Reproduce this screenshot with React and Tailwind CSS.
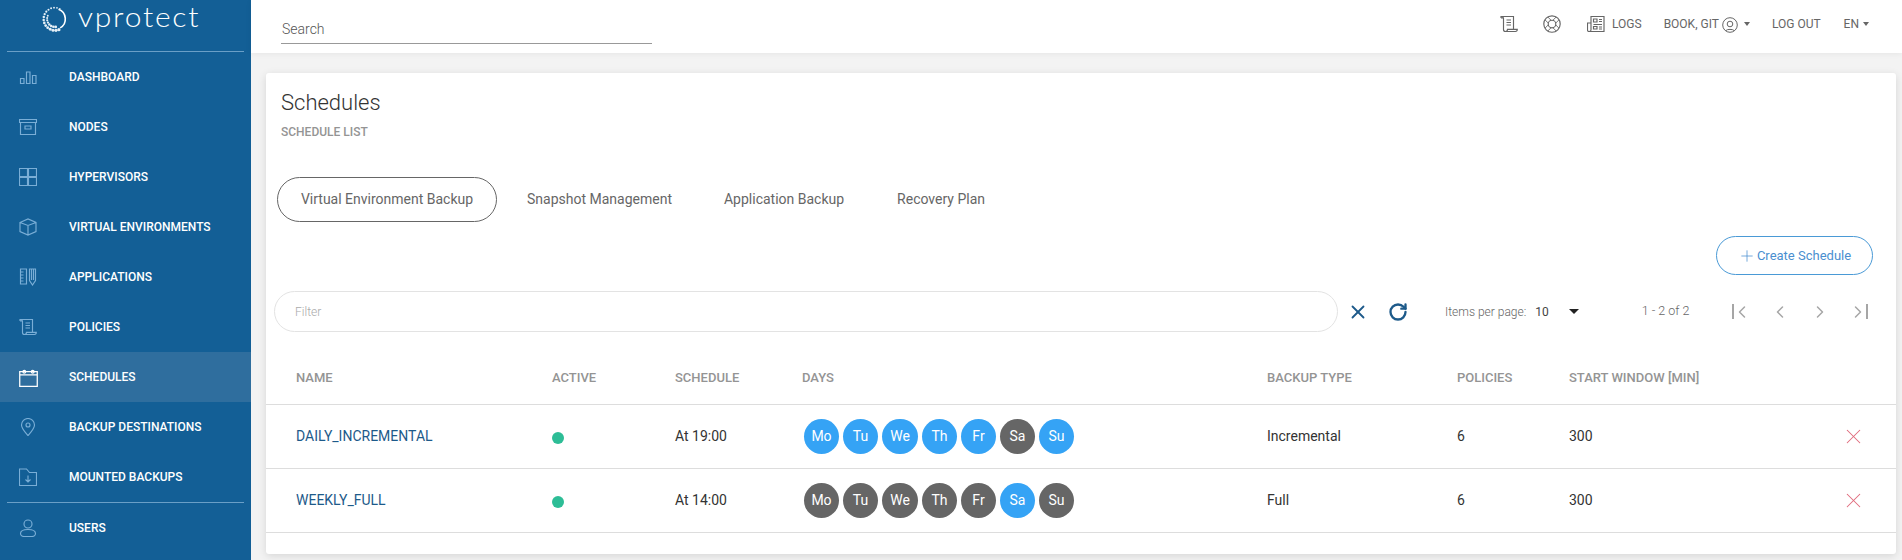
import { Plus, RotateCw, X, ChevronLeft, ChevronRight } from 'lucide-react';

const Svg = ({ children, className = 'w-[18px] h-[18px]' }) => (
  <svg viewBox="0 0 18 18" fill="none" stroke="currentColor" strokeWidth="1.150" className={className}>
    {children}
  </svg>
);

const BarsIcon = () => (
  <Svg>
    <path d="M1.500 10.500h3.500v5h-3.500zM7.500 4h3.500v11.500h-3.500zM13.500 7.500h3.500v8h-3.500z" />
  </Svg>
);
const ArchiveIcon = () => (
  <Svg>
    <path d="M.5 1.500h17v3h-17zM1.500 4.500v12h15v-12M6 8h6v3h-6z" />
  </Svg>
);
const GridIcon = () => (
  <Svg>
    <path d="M.5.5h8v8h-8zM9.500.5h8v8h-8zM.5 9.500h8v8h-8zM9.500 9.500h8v8h-8z" />
  </Svg>
);
const BoxIcon = () => (
  <Svg>
    <path d="M1 4.500 9 1l8 3.500v9L9 17l-8-3.500zM1 4.500 9 7.500l8-3M9 7.500V17" />
  </Svg>
);
const RulerPenIcon = () => (
  <Svg>
    <path d="M1.500 1h6v15h-6zM1.500 4h3M1.500 7h3M1.500 10h3M1.500 13h3M10.500 1h6v11.500l-3 4.500-3-4.500zM12.500 1v11M14.500 1v11" />
  </Svg>
);
const ScrollIcon = () => (
  <Svg>
    <path d="M1 3V1.500h12.500V14M1 3h2.500M1 1.500c1.500 0 2.500.5 2.500 2v11c0 1 .8 2 2 2h10c1 0 1.800-1 1.800-2.200H7.500c0 1.200-.8 2.200-2 2.200M6.500 5h4.500M6.500 7.500h4.500M6.500 10h4.500" />
  </Svg>
);
const CalendarIcon = () => (
  <Svg className="w-[19px] h-[19px]">
    <path d="M.7 3.500h16.600v13.800H.7zM.7 6.500h16.600" strokeWidth="1.200" />
    <circle cx="5" cy="3.500" r="1.300" />
    <circle cx="13" cy="3.500" r="1.300" />
  </Svg>
);
const PinIcon = () => (
  <Svg>
    <path d="M9 17.500C5.500 13.500 2.500 10.500 2.500 7a6.500 6.500 0 0 1 13 0c0 3.500-3 6.500-6.500 10.500z" />
    <circle cx="9" cy="7" r="2" />
  </Svg>
);
const FolderDownIcon = () => (
  <Svg>
    <path d="M.5 1h7l3 3.500h7v13H.5zM9 7.500v6.500M6.500 11.500 9 14l2.500-2.500" />
  </Svg>
);
const UserIcon = () => (
  <Svg>
    <circle cx="9" cy="5" r="4" />
    <path d="M9 10.500c4.500 0 7.500 1.500 7.500 4 0 2-2 3-3.500 3H5c-1.500 0-3.500-1-3.500-3 0-2.500 3-4 7.500-4z" />
  </Svg>
);
const BuoyIcon = () => (
  <Svg>
    <circle cx="9" cy="9" r="8.200" />
    <circle cx="9" cy="9" r="3.800" />
    <path
      d="M8.130 5.310 4.790 1.970M5.310 8.130 1.970 4.790M9.870 5.310l3.340-3.340M12.690 8.130l3.340-3.340M8.130 12.690l-3.340 3.340M5.310 9.870l-3.340 3.340M9.870 12.690l3.340 3.340M12.690 9.870l3.340 3.340"
      strokeWidth=".9"
    />
  </Svg>
);
const NewsIcon = () => (
  <Svg>
    <path d="M4 1.500h13v15H2c-1 0-1.500-.7-1.500-1.500V8H4zM4 8v7c0 1-.8 1.500-2 1.500M6.500 4h3.500v3H6.500zM12 4.500h3M12 6.500h3M6.500 9.500h8.500M6.500 11.500h3.500v2.500H6.500zM12 12h3M12 14h3" />
  </Svg>
);
const UserCircleIcon = () => (
  <svg viewBox="0 0 16 16" fill="none" stroke="currentColor" strokeWidth="1" className="w-4 h-4">
    <circle cx="8" cy="8" r="7.300" />
    <circle cx="8" cy="7" r="2.800" />
    <path d="M4 13.500c1-1.500 7-1.500 8 0" />
  </svg>
);

// dots of the logo ring: angle in degrees, radius of the ring, size of the dot
const logoDots = [
  ...Array.from({ length: 16 }, (_, i) => {
    const angle = 70 + i * 15;
    return { angle, ring: 10.500, size: 1.500 - i * 0.050 };
  }),
  ...Array.from({ length: 8 }, (_, i) => ({ angle: 85 + i * 17, ring: 7.300, size: 1.300 - i * 0.060 })),
];

const LogoIcon = () => (
  <svg viewBox="0 0 24 24" fill="none" className="w-[26px] h-[26px]">
    <path d="M15.250 3.070A9.500 9.500 0 0 1 16.750 20.230" stroke="#ffffff" strokeWidth="1.500" />
    {logoDots.map((d, i) => (
      <circle
        key={i}
        cx={12 + d.ring * Math.cos((d.angle * Math.PI) / 180)}
        cy={12 + d.ring * Math.sin((d.angle * Math.PI) / 180)}
        r={d.size}
        fill="#e6f0f7"
      />
    ))}
  </svg>
);

const navItems = [
  { label: 'DASHBOARD', icon: BarsIcon },
  { label: 'NODES', icon: ArchiveIcon },
  { label: 'HYPERVISORS', icon: GridIcon },
  { label: 'VIRTUAL ENVIRONMENTS', icon: BoxIcon },
  { label: 'APPLICATIONS', icon: RulerPenIcon },
  { label: 'POLICIES', icon: ScrollIcon },
  { label: 'SCHEDULES', icon: CalendarIcon, active: true },
  { label: 'BACKUP DESTINATIONS', icon: PinIcon },
  { label: 'MOUNTED BACKUPS', icon: FolderDownIcon },
];

const NavItem = ({ label, icon: Icon, active }) => (
  <div className={`h-[50px] flex items-center pl-[19px] text-[12px] font-medium text-white ${active ? 'bg-[#2f6e9e]' : ''}`}>
    <span className={`w-[50px] shrink-0 ${active ? 'text-white' : 'text-[#7aaed6]'}`}>
      <Icon />
    </span>
    {label}
  </div>
);

const Sidebar = () => (
  <aside className="w-[251px] shrink-0 h-[560px] bg-[#135f96] overflow-hidden">
    <div className="h-[51px] flex items-start pt-[6px] pl-[42px] gap-[10px] text-white">
      <LogoIcon />
      <span className="text-[27px] leading-[22px] font-['Lato'] font-light tracking-[1.6px] scale-x-[1.11] origin-left">vprotect</span>
    </div>
    <div className="h-px mx-[7px] bg-[#6a9fc7]" />
    {navItems.map((item) => <NavItem key={item.label} {...item} />)}
    <div className="h-px mx-[7px] bg-[#6a9fc7]" />
    <NavItem label="USERS" icon={UserIcon} />
  </aside>
);

const Caret = () => (
  <span className="inline-block border-x-[3.500px] border-x-transparent border-t-[4px] border-t-[#666]" />
);

const Header = () => (
  <header className="h-[53px] bg-white flex items-center justify-between pl-[30px] shadow-[0_1px_6px_rgba(0,0,0,0.06)] text-[#666] text-[12px]">
    <div className="w-[371px] h-[26px] mt-[8px] border-b border-[#999] text-[14px] font-light text-[#555] pt-px pl-px">Search</div>
    <div className="flex items-center pb-[6px] pr-[33px]">
      <span className="mr-[25px]"><ScrollIcon /></span>
      <span className="mr-[26px]"><BuoyIcon /></span>
      <span className="mr-[7px]"><NewsIcon /></span>
      <span className="mr-[22px]">LOGS</span>
      <span>BOOK, GIT</span>
      <span className="ml-[3px] mt-[2px] mr-[6px]"><UserCircleIcon /></span>
      <Caret />
      <span className="ml-[22px] mr-[23px]">LOG OUT</span>
      <span className="mr-[4px]">EN</span>
      <Caret />
    </div>
  </header>
);

const tabs = ['Virtual Environment Backup', 'Snapshot Management', 'Application Backup', 'Recovery Plan'];

const Tabs = () => (
  <div className="flex items-center text-[14px] text-[#666] ml-[11px]">
    <div className="h-[45px] w-[220px] flex items-center justify-center border border-[#666] rounded-full mr-[30px]">{tabs[0]}</div>
    <div className="mr-[52px]">{tabs[1]}</div>
    <div className="mr-[53px]">{tabs[2]}</div>
    <div>{tabs[3]}</div>
  </div>
);

const Toolbar = () => (
  <div className="flex items-center h-[41px] mt-[16px] pl-[8px] text-[12px] text-[#888]">
    <div className="w-[1064px] h-[41px] border border-[#e3e3e3] rounded-full flex items-center pl-[20px] text-[12px] text-[#aaa] font-light">Filter</div>
    <X className="w-[22px] h-[22px] ml-[9px] text-[#1d5a8a]" strokeWidth={2} />
    <RotateCw className="w-[20px] h-[20px] ml-[19px] text-[#1d5a8a]" strokeWidth={2.800} />
    <span className="ml-[37px] font-light text-[#666]">Items per page:</span>
    <span className="ml-[9px] text-[#444]">10</span>
    <span className="ml-[20px] inline-block border-x-[5px] border-x-transparent border-t-[5px] border-t-[#222]" />
    <span className="ml-[63px] w-[49px] text-[12.500px] font-light text-[#666]">1 - 2 of 2</span>
    <div className="flex items-center ml-[41px] text-[#a6a6a6]">
      <span className="w-[2px] h-[15px] bg-[#a6a6a6]" />
      <ChevronLeft className="w-[20px] h-[20px] ml-[-2px]" strokeWidth={1.800} />
      <ChevronLeft className="w-[20px] h-[20px] ml-[18px]" strokeWidth={1.800} />
      <ChevronRight className="w-[20px] h-[20px] ml-[20px]" strokeWidth={1.800} />
      <ChevronRight className="w-[20px] h-[20px] ml-[18px]" strokeWidth={1.800} />
      <span className="w-[2px] h-[15px] bg-[#a6a6a6] ml-[-2px]" />
    </div>
  </div>
);

const days = ['Mo', 'Tu', 'We', 'Th', 'Fr', 'Sa', 'Su'];

const rows = [
  { name: 'DAILY_INCREMENTAL', time: 'At 19:00', on: ['Mo', 'Tu', 'We', 'Th', 'Fr', 'Su'], type: 'Incremental' },
  { name: 'WEEKLY_FULL', time: 'At 14:00', on: ['Sa'], type: 'Full' },
];

const gridCols = 'grid grid-cols-[256px_123px_127px_465px_190px_112px_272px_1fr] items-center pl-[30px]';

const Table = () => (
  <div className="mt-[24px]">
    <div className={`${gridCols} h-[49px] pb-[5px] border-b border-[#ddd] text-[13px] font-medium text-[#949494]`}>
      <div>NAME</div>
      <div>ACTIVE</div>
      <div>SCHEDULE</div>
      <div>DAYS</div>
      <div>BACKUP TYPE</div>
      <div>POLICIES</div>
      <div>START WINDOW [MIN]</div>
    </div>
    {rows.map((r) => (
      <div key={r.name} className={`${gridCols} h-[64px] border-b border-[#ddd] text-[14px] text-[#333]`}>
        <div className="text-[#1d5a8a]">{r.name}</div>
        <div className="pt-[3px]"><span className="block w-[12px] h-[12px] rounded-full bg-[#2dbd96]" /></div>
        <div>{r.time}</div>
        <div className="flex gap-[4px] ml-[2px]">
          {days.map((d) => (
            <span
              key={d}
              className={`${d === 'We' ? 'w-[36px]' : 'w-[35px]'} h-[35px] rounded-full flex items-center justify-center text-[14px] text-white ${r.on.includes(d) ? 'bg-[#35a3f5]' : 'bg-[#666]'}`}
            >
              {d}
            </span>
          ))}
        </div>
        <div>{r.type}</div>
        <div>6</div>
        <div>300</div>
        <div><X className="w-[25px] h-[25px] text-[#e06a7c]" strokeWidth={1} /></div>
      </div>
    ))}
  </div>
);

export default function App() {
  return (
    <div className="flex h-[560px] w-[1902px] overflow-hidden bg-[#f3f3f3] font-['Roboto',sans-serif]">
      <Sidebar />
      <main className="flex-1 min-w-0">
        <Header />
        <section className="h-[481px] mt-[20px] ml-[15px] mr-[6px] bg-white rounded-[3px] shadow-[0_2px_8px_rgba(0,0,0,0.12)]">
          <div className="pt-[14px] pl-[15px]">
            <h1 className="text-[22px] leading-[32px] font-light text-[#333]">Schedules</h1>
            <p className="mt-[5px] text-[12px] leading-[16px] font-medium text-[#949494]">SCHEDULE LIST</p>
          </div>
          <div className="mt-[37px]"><Tabs /></div>
          <div className="flex justify-end pr-[23px] mt-[14px]">
            <div className="w-[157px] h-[39px] border border-[#4a9ad6] rounded-full flex items-center justify-center gap-[1px] text-[13px] text-[#4a8fd0]">
              <Plus className="w-[18px] h-[18px]" strokeWidth={1} />
              Create Schedule
            </div>
          </div>
          <Toolbar />
          <Table />
        </section>
      </main>
    </div>
  );
}
